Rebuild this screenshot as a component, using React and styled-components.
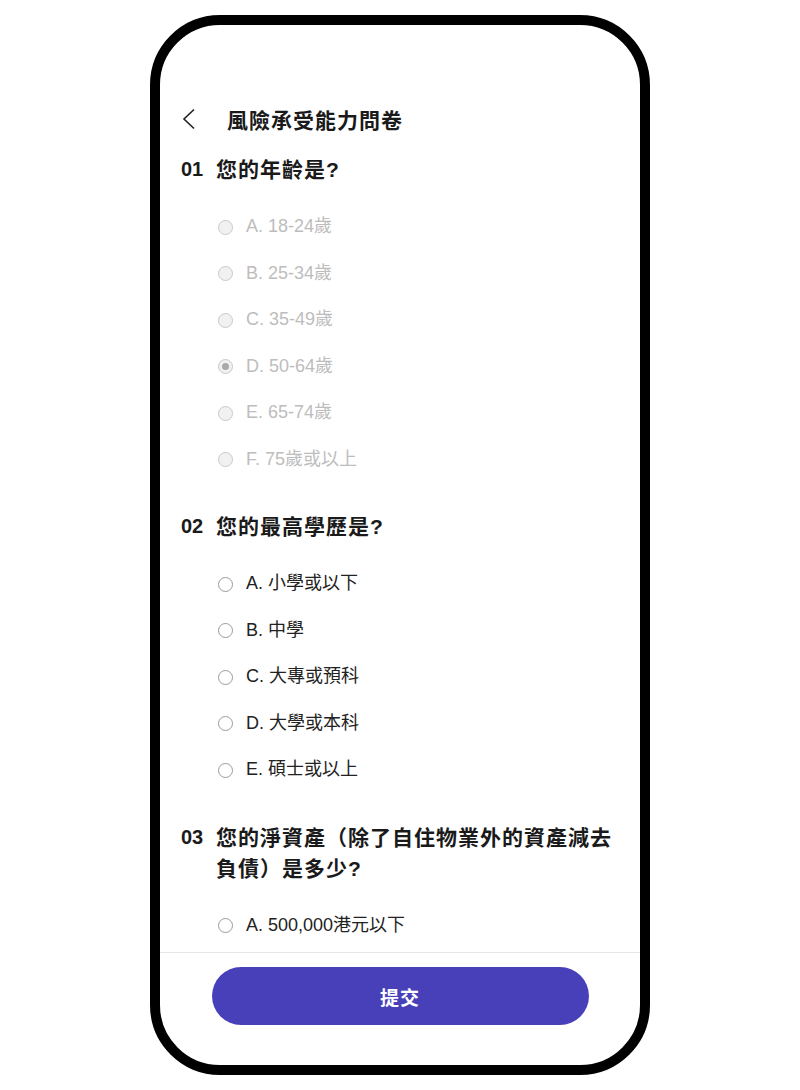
import React from "react";
import styled, { createGlobalStyle } from "styled-components";

const Global = createGlobalStyle`
  html, body { margin: 0; padding: 0; background: #fff; }
  body { font-family: "Liberation Sans", "Noto Sans CJK TC", sans-serif; }
`;

const Frame = styled.div`
  box-sizing: border-box;
  width: 500px;
  height: 1060px;
  margin: 15px auto 0;
  border: 10px solid #000;
  border-radius: 70px;
  overflow: hidden;
  display: flex;
  flex-direction: column;
  background: #fff;
`;

const Scroll = styled.div`
  flex: 1;
  overflow: hidden;
  padding: 72px 20px 0 21px;
`;

const Header = styled.div`
  display: flex;
  align-items: center;
  height: 44px;
  margin-bottom: 13px;
`;

const Back = styled.svg`
  width: 16px;
  height: 22px;
  margin-right: 30px;
  flex-shrink: 0;
`;

const Title = styled.h1`
  margin: 0;
  font-size: 21px;
  font-weight: 700;
  letter-spacing: 1px;
  color: #1a1a1a;
`;

const Section = styled.section`
  margin-bottom: 28px;
`;

const Question = styled.div`
  display: flex;
  font-size: 21px;
  font-weight: 700;
  line-height: 31px;
  color: #1a1a1a;
  margin-bottom: 19px;
`;

const QNum = styled.span`
  flex-shrink: 0;
  width: 35px;
  font-size: 20px;
`;

const QText = styled.span`
  letter-spacing: 1px;
`;

const Options = styled.div`
  display: flex;
  flex-direction: column;
  padding-left: 37px;
`;

const Option = styled.label`
  display: flex;
  align-items: center;
  height: 46.5px;
  font-size: 18px;
  line-height: 22px;
  color: ${(p) => (p.$disabled ? "#bdbdbd" : "#222")};
`;

const OptionText = styled.span`
  margin-top: -2px;
`;

const Radio = styled.span`
  box-sizing: border-box;
  width: 15px;
  height: 15px;
  border-radius: 50%;
  margin-right: 13px;
  flex-shrink: 0;
  border: 1.5px solid ${(p) => (p.$disabled ? "#c9c9c9" : "#9a9a9a")};
  background: ${(p) => (p.$disabled ? "#f1f1f1" : "#fff")};
  display: flex;
  align-items: center;
  justify-content: center;
  &::after {
    content: "";
    display: ${(p) => (p.$checked ? "block" : "none")};
    width: 7px;
    height: 7px;
    border-radius: 50%;
    background: #a9a9a9;
  }
`;

const Footer = styled.div`
  box-sizing: border-box;
  height: 113px;
  border-top: 1px solid #e6e6e6;
  padding-top: 14px;
  display: flex;
  justify-content: center;
  align-items: flex-start;
`;

const Submit = styled.button`
  width: 377px;
  height: 58px;
  border: none;
  border-radius: 29px;
  background: #4840b9;
  color: #fff;
  font-family: "Liberation Sans", "Noto Sans CJK TC", sans-serif;
  font-size: 19px;
  font-weight: 700;
  letter-spacing: 1px;
`;

const questions = [
  {
    num: "01",
    text: "您的年齡是?",
    disabled: true,
    checked: 3,
    options: ["A. 18-24歲", "B. 25-34歲", "C. 35-49歲", "D. 50-64歲", "E. 65-74歲", "F. 75歲或以上"],
  },
  {
    num: "02",
    text: "您的最高學歷是?",
    options: ["A. 小學或以下", "B. 中學", "C. 大專或預科", "D. 大學或本科", "E. 碩士或以上"],
  },
  {
    num: "03",
    text: "您的淨資產（除了自住物業外的資產減去負債）是多少?",
    options: ["A. 500,000港元以下"],
  },
];

export default function App() {
  return (
    <>
      <Global />
      <Frame>
        <Scroll>
          <Header>
            <Back viewBox="0 0 16 22">
              <polyline points="13,1.5 3,11 13,20.5" fill="none" stroke="#222" strokeWidth="1.6" />
            </Back>
            <Title>風險承受能力問卷</Title>
          </Header>
          {questions.map((q) => (
            <Section key={q.num}>
              <Question>
                <QNum>{q.num}</QNum>
                <QText>{q.text}</QText>
              </Question>
              <Options>
                {q.options.map((o, i) => (
                  <Option key={o} $disabled={q.disabled}>
                    <Radio $disabled={q.disabled} $checked={q.checked === i} />
                    <OptionText>{o}</OptionText>
                  </Option>
                ))}
              </Options>
            </Section>
          ))}
        </Scroll>
        <Footer>
          <Submit>提交</Submit>
        </Footer>
      </Frame>
    </>
  );
}
